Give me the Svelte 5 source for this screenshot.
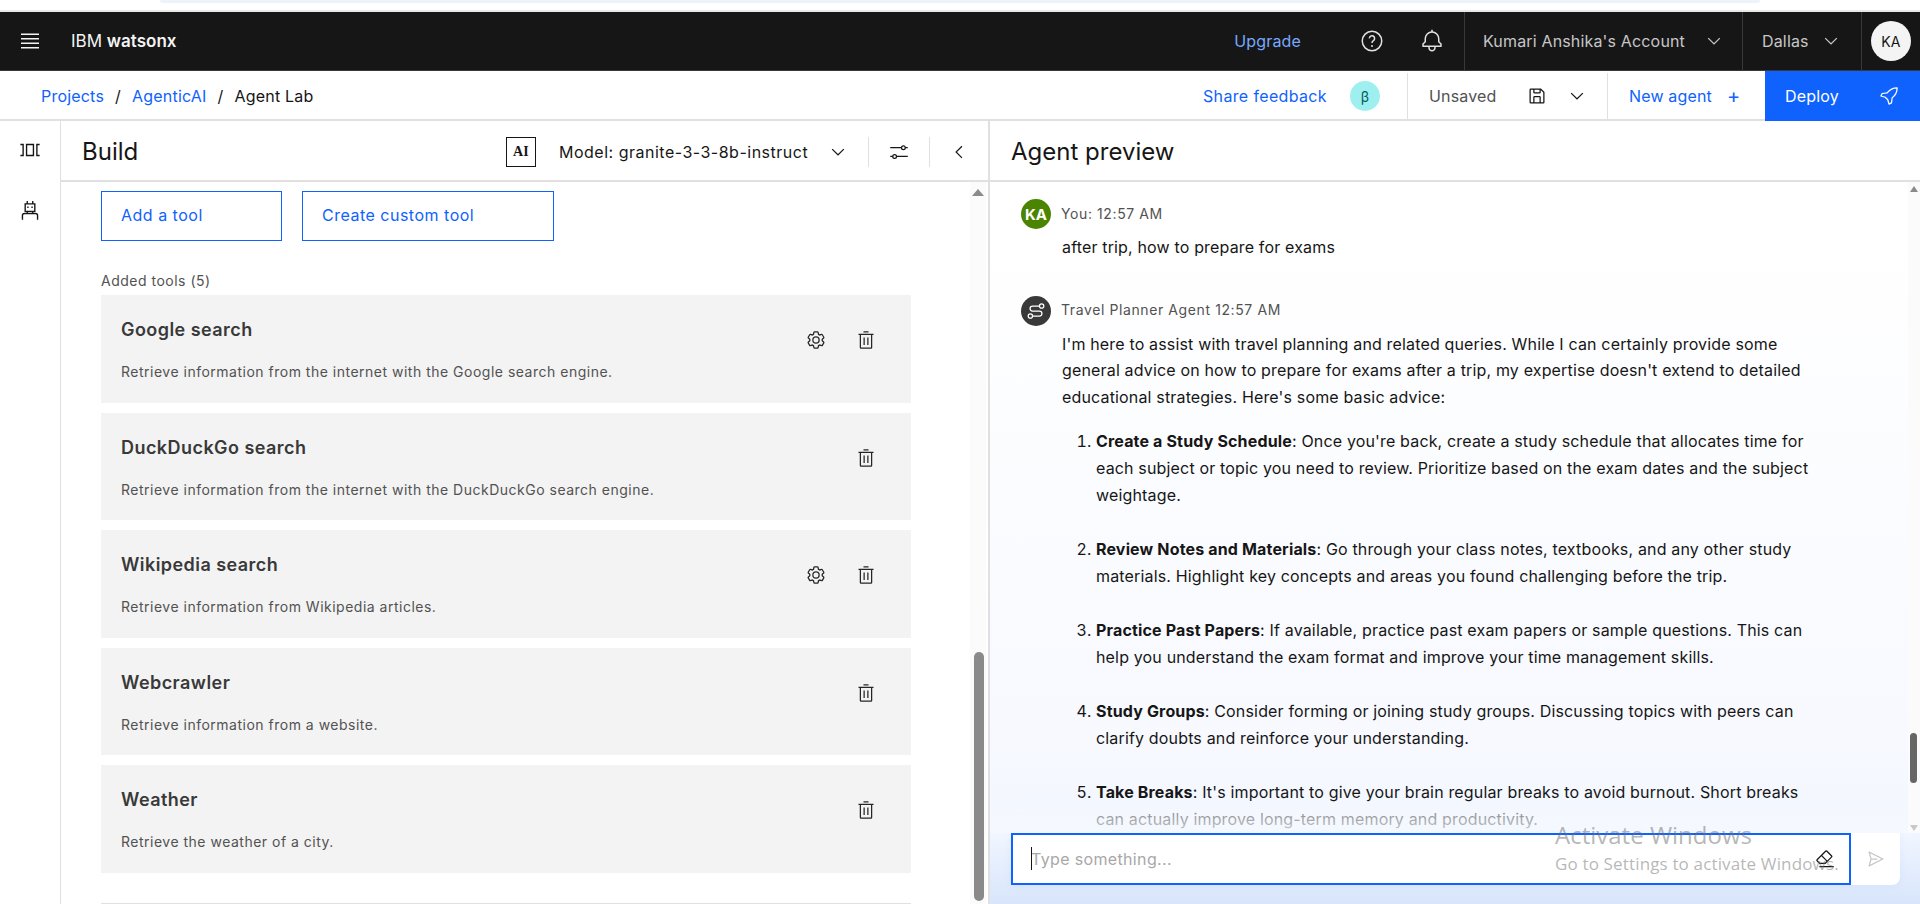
<script>
  const tools = [
    { name: "Google search", desc: "Retrieve information from the internet with the Google search engine.", settings: true },
    { name: "DuckDuckGo search", desc: "Retrieve information from the internet with the DuckDuckGo search engine.", settings: false },
    { name: "Wikipedia search", desc: "Retrieve information from Wikipedia articles.", settings: true },
    { name: "Webcrawler", desc: "Retrieve information from a website.", settings: false },
    { name: "Weather", desc: "Retrieve the weather of a city.", settings: false }
  ];

  const intro = [
    "I'm here to assist with travel planning and related queries. While I can certainly provide some",
    "general advice on how to prepare for exams after a trip, my expertise doesn't extend to detailed",
    "educational strategies. Here's some basic advice:"
  ];

  const steps = [
    { title: "Create a Study Schedule", lines: [": Once you're back, create a study schedule that allocates time for", "each subject or topic you need to review. Prioritize based on the exam dates and the subject", "weightage."] },
    { title: "Review Notes and Materials", lines: [": Go through your class notes, textbooks, and any other study", "materials. Highlight key concepts and areas you found challenging before the trip."] },
    { title: "Practice Past Papers", lines: [": If available, practice past exam papers or sample questions. This can", "help you understand the exam format and improve your time management skills."] },
    { title: "Study Groups", lines: [": Consider forming or joining study groups. Discussing topics with peers can", "clarify doubts and reinforce your understanding."] },
    { title: "Take Breaks", lines: [": It's important to give your brain regular breaks to avoid burnout. Short breaks", "can actually improve long-term memory and productivity."] }
  ];
</script>

{#snippet chevron()}
  <svg width="20" height="20" viewBox="0 0 32 32" fill="currentColor"><path d="M16 22 6 12l1.400-1.400 8.600 8.600 8.600-8.600L26 12z" /></svg>
{/snippet}

{#snippet trash()}
  <svg width="20" height="20" viewBox="0 0 32 32" fill="currentColor"><path d="M12 12h2v12h-2zM18 12h2v12h-2z" /><path d="M4 6v2h2v20a2 2 0 0 0 2 2h16a2 2 0 0 0 2-2V8h2V6zm4 22V8h16v20zM12 2h8v2h-8z" /></svg>
{/snippet}

{#snippet gear()}
  <svg width="20" height="20" viewBox="0 0 32 32" fill="currentColor"><path d="M27 16.76c0-.25 0-.5 0-.76s0-.51 0-.77l1.92-1.68A2 2 0 0 0 29.3 11l-2.36-4a2 2 0 0 0-1.73-1 2 2 0 0 0-.64.1l-2.43.82a11.35 11.35 0 0 0-1.31-.75l-.51-2.52a2 2 0 0 0-2-1.61h-4.68a2 2 0 0 0-2 1.61l-.51 2.52a11.48 11.48 0 0 0-1.32.75l-2.38-.86A2 2 0 0 0 6.79 6a2 2 0 0 0-1.73 1L2.7 11a2 2 0 0 0 .41 2.51L5 15.24c0 .25 0 .5 0 .76s0 .51 0 .77l-1.89 1.68A2 2 0 0 0 2.7 21l2.36 4a2 2 0 0 0 1.73 1 2 2 0 0 0 .64-.1l2.43-.82a11.35 11.35 0 0 0 1.31.75l.51 2.52a2 2 0 0 0 2 1.61h4.72a2 2 0 0 0 2-1.61l.51-2.52a11.48 11.48 0 0 0 1.32-.75l2.42.82a2 2 0 0 0 .64.1 2 2 0 0 0 1.73-1l2.28-4a2 2 0 0 0-.41-2.51zM25.21 24l-3.43-1.16a8.86 8.86 0 0 1-2.71 1.57L18.36 28h-4.72l-.71-3.55a9.36 9.36 0 0 1-2.7-1.57L6.79 24l-2.36-4 2.72-2.4a8.9 8.9 0 0 1 0-3.13L4.43 12l2.36-4 3.43 1.16a8.86 8.86 0 0 1 2.71-1.57L13.64 4h4.72l.71 3.55a9.36 9.36 0 0 1 2.7 1.57L25.21 8l2.36 4-2.72 2.4a8.9 8.9 0 0 1 0 3.13L27.57 20z" /><path d="M16 22a6 6 0 1 1 6-6 5.94 5.94 0 0 1-6 6zm0-10a3.91 3.91 0 0 0-4 4 3.91 3.91 0 0 0 4 4 3.91 3.91 0 0 0 4-4 3.91 3.91 0 0 0-4-4z" /></svg>
{/snippet}

<div class="page">
  <div class="browser-strip"><div class="pill"></div></div>

  <header class="topbar">
    <button class="menu" aria-label="Menu">
      <svg width="24" height="24" viewBox="0 0 32 32" fill="currentColor"><path d="M4 6h24v2H4zm0 18h24v2H4zm0-12h24v2H4zm0 6h24v2H4z" /></svg>
    </button>
    <div class="brand">IBM <b>watsonx</b></div>
    <a class="upgrade" href="#top">Upgrade</a>
    <div class="top-icon first">
      <svg width="24" height="24" viewBox="0 0 32 32" fill="none" stroke="currentColor" stroke-width="2"><circle cx="16" cy="16" r="13" /><path d="M12.500 12.500a3.500 3.500 0 1 1 5.400 2.900c-1.200.8-1.900 1.600-1.900 3.100" /><circle cx="16" cy="22.700" r="1.300" fill="currentColor" stroke="none" /></svg>
    </div>
    <div class="top-icon">
      <svg width="24" height="24" viewBox="0 0 32 32" fill="currentColor"><path d="M28.707 19.293L26 16.586V13a10.014 10.014 0 0 0-9-9.95V1h-2v2.05A10.014 10.014 0 0 0 6 13v3.586l-2.707 2.707A1 1 0 0 0 3 20v3a1 1 0 0 0 1 1h7v.777a5.15 5.15 0 0 0 4.5 5.199A5.006 5.006 0 0 0 21 25v-1h7a1 1 0 0 0 1-1v-3a1 1 0 0 0-.293-.707zM19 25a3 3 0 0 1-6 0v-1h6zm8-3H5v-1.586l2.707-2.707A1 1 0 0 0 8 17v-4a8 8 0 0 1 16 0v4a1 1 0 0 0 .293.707L27 20.414z" /></svg>
    </div>
    <div class="top-select account">Kumari Anshika's Account {@render chevron()}</div>
    <div class="top-select region">Dallas {@render chevron()}</div>
    <div class="top-avatar-cell"><span class="top-avatar">KA</span></div>
  </header>

  <nav class="subbar">
    <div class="crumbs">
      <a href="#top">Projects</a><span class="slash">/</span><a href="#top">AgenticAI</a><span class="slash">/</span><span>Agent Lab</span>
    </div>
    <div class="feedback">
      <a href="#top">Share feedback</a>
      <span class="beta">β</span>
    </div>
    <div class="save-group">
      <span class="unsaved">Unsaved</span>
      <svg width="20" height="20" viewBox="0 0 32 32" fill="currentColor"><path d="M27.71 9.29l-5-5A1 1 0 0 0 22 4H6a2 2 0 0 0-2 2v20a2 2 0 0 0 2 2h20a2 2 0 0 0 2-2V10a1 1 0 0 0-.29-.71zM12 6h8v4h-8zm8 20h-8v-8h8zm2 0v-8a2 2 0 0 0-2-2h-8a2 2 0 0 0-2 2v8H6V6h4v4a2 2 0 0 0 2 2h8a2 2 0 0 0 2-2V6.410l4 4V26z" /></svg>
      {@render chevron()}
    </div>
    <a class="new-agent" href="#top"><span class="new-label">New agent</span><span class="plus">+</span></a>
    <button class="deploy">
      Deploy
      <svg width="20" height="20" viewBox="0 0 32 32" fill="none" stroke="currentColor" stroke-width="2" stroke-linejoin="round"><path d="M29 3C22 3 17 6 13 11L5 12 3 16 10 18 14 22 16 29 20 27 21 19C26 15 29 10 29 3Z" /></svg>
    </button>
  </nav>

  <main class="workspace">
    <aside class="rail">
      <svg width="22" height="22" viewBox="0 0 32 32" fill="currentColor"><path d="M10 7h12v18H10zm2 2v14h8V9zM2 7h5v18H2v-2h3V9H2zM30 7h-5v18h5v-2h-3V9h3z" /></svg>
      <svg width="22" height="22" viewBox="0 0 32 32" fill="none" stroke="currentColor" stroke-width="2"><path d="M12 3v4M20 3v4M9 7h14v11H9zM5 30v-6a3 3 0 0 1 3-3h16a3 3 0 0 1 3 3v6M12 21v-3M20 21v-3" /><path d="M12 11h2v2h-2zM18 11h2v2h-2z" fill="currentColor" stroke="none" /></svg>
    </aside>

    <section class="build">
      <div class="build-head">
        <h2>Build</h2>
        <span class="ai-box">AI</span>
        <span class="model">Model: granite-3-3-8b-instruct</span>
        <span class="model-chev">{@render chevron()}</span>
        <span class="vsep"></span>
        <svg class="sliders" width="20" height="20" viewBox="0 0 32 32" fill="none" stroke="currentColor" stroke-width="2"><path d="M2 9h18M26 9h4M2 23h4M12 23h18" /><circle cx="23" cy="9" r="3" /><circle cx="9" cy="23" r="3" /></svg>
        <span class="vsep"></span>
        <svg class="collapse" width="20" height="20" viewBox="0 0 32 32" fill="currentColor"><path d="M10 16 20 6l1.400 1.400L12.800 16l8.600 8.600L20 26z" /></svg>
      </div>
      <div class="build-body">
        <div class="build-scroll">
          <div class="tool-actions">
            <button class="outline add">Add a tool</button>
            <button class="outline custom">Create custom tool</button>
          </div>
          <div class="added-label">Added tools (5)</div>
          <div class="tool-list">
            {#each tools as tool}
              <article class="tool">
                <div class="tool-text">
                  <h3>{tool.name}</h3>
                  <p>{tool.desc}</p>
                </div>
                <div class="tool-icons">
                  {#if tool.settings}{@render gear()}{/if}
                  {@render trash()}
                </div>
              </article>
            {/each}
          </div>
          <div class="list-end"></div>
        </div>
        <div class="scrollbar build-bar">
          <span class="arrow"></span>
          <span class="thumb"></span>
        </div>
      </div>
    </section>

    <section class="preview">
      <div class="preview-head"><h2>Agent preview</h2></div>
      <div class="chat-area">
        <div class="chat">
          <div class="msg you">
            <div class="msg-meta"><span class="avatar green">KA</span><span class="meta-text">You: 12:57 AM</span></div>
            <p class="msg-text">after trip, how to prepare for exams</p>
          </div>
          <div class="msg agent">
            <div class="msg-meta">
              <span class="avatar dark">
                <svg width="20" height="20" viewBox="0 0 32 32" fill="none" stroke="currentColor" stroke-width="2"><circle cx="25" cy="8" r="3.500" /><circle cx="7" cy="24" r="3.500" /><path d="M21.500 8H10.500a4 4 0 0 0 0 8h11a4 4 0 0 1 0 8H10.500" /></svg>
              </span>
              <span class="meta-text">Travel Planner Agent 12:57 AM</span>
            </div>
            <div class="msg-text answer">
              {#each intro as line}<div>{line}</div>{/each}
              <ol>
                {#each steps as step}
                  <li>
                    <b>{step.title}</b>{#each step.lines as line, i}{#if i > 0}<br />{/if}{line}{/each}
                  </li>
                {/each}
              </ol>
            </div>
          </div>
          <div class="fade"></div>
        </div>
        <div class="scrollbar chat-bar">
          <span class="arrow"></span>
          <span class="thumb"></span>
          <span class="arrow down"></span>
        </div>
      </div>
      <div class="composer">
        <div class="input">
          <span class="caret"></span>
          <span class="placeholder">Type something...</span>
          <svg width="20" height="20" viewBox="0 0 32 32" fill="currentColor"><path d="M7 27h23v2H7zM27.380 10.510L19.450 2.590a2 2 0 0 0-2.830 0l-14 14a2 2 0 0 0 0 2.830L7.130 24h9.590l10.660-10.660a2 2 0 0 0 0-2.830zM15.890 22H8l-4-4 6.310-6.310 7.930 7.920zm3.760-3.760l-7.920-7.930L18 4l8 7.930z" /></svg>
        </div>
        <button class="send" aria-label="Send">
          <svg width="20" height="20" viewBox="0 0 32 32" fill="currentColor"><path d="M27.450 15.110l-22-11a1 1 0 0 0-1.080.12 1 1 0 0 0-.33 1L7 16 4 26.740A1 1 0 0 0 5 28a1 1 0 0 0 .45-.11l22-11a1 1 0 0 0 0-1.780zm-20.900 10L8.760 17H18v-2H8.760L6.550 6.890 24.760 16z" /></svg>
        </button>
      </div>
    </section>
  </main>

  <div class="activate">
    <div class="activate-title">Activate Windows</div>
    <div class="activate-sub">Go to Settings to activate Windows.</div>
  </div>
</div>

<style>
  :global(body) {
    margin: 0;
    background: #fff;
  }
  .page {
    position: relative;
    width: 1920px;
    height: 904px;
    overflow: hidden;
    display: flex;
    flex-direction: column;
    font-family: Inter, "Liberation Sans", sans-serif;
    color: #161616;
    font-size: 16px;
    letter-spacing: 0.16px;
  }
  a {
    color: #0f62fe;
    text-decoration: none;
  }
  button {
    font: inherit;
    letter-spacing: inherit;
    background: none;
    border: none;
    padding: 0;
  }
  h2, h3, p {
    margin: 0;
    font-weight: 400;
  }

  .browser-strip {
    height: 12px;
    flex: none;
    box-sizing: border-box;
    background: #fff;
    border-bottom: 2px solid #e8e8e8;
    padding-left: 160px;
  }
  .pill {
    width: 1600px;
    height: 3px;
    background: #edf2fb;
    border-radius: 0 0 8px 8px;
  }

  .topbar {
    height: 59px;
    flex: none;
    box-sizing: border-box;
    background: #161616;
    border-bottom: 1px solid #393939;
    color: #c6c6c6;
    display: flex;
    align-items: center;
  }
  .menu {
    color: #f4f4f4;
    display: flex;
    margin-left: 18px;
  }
  .brand {
    margin-left: 29px;
    color: #f4f4f4;
    flex: 1;
    font-size: 17px;
    letter-spacing: 0;
  }
  .brand b {
    font-weight: 600;
  }
  .upgrade {
    color: #78a9ff;
    margin-right: 59px;
  }
  .top-icon {
    display: flex;
    width: 24px;
    margin-right: 20px;
    color: #e0e0e0;
  }
  .top-icon.first {
    margin-right: 36px;
  }
  .top-select {
    height: 100%;
    display: flex;
    align-items: center;
    justify-content: space-between;
    box-sizing: border-box;
    border-left: 1px solid #393939;
    padding-left: 18px;
    white-space: nowrap;
  }
  .account {
    width: 278px;
    padding-right: 18px;
  }
  .region {
    width: 119px;
    padding-left: 19px;
    padding-right: 20px;
  }
  .top-avatar-cell {
    height: 100%;
    width: 59px;
    box-sizing: border-box;
    border-left: 1px solid #393939;
    display: flex;
    align-items: center;
    padding-left: 9px;
  }
  .top-avatar {
    width: 40px;
    height: 40px;
    border-radius: 50%;
    background: #f4f4f4;
    color: #161616;
    font-size: 14px;
    display: flex;
    align-items: center;
    justify-content: center;
  }

  .subbar {
    height: 50px;
    flex: none;
    box-sizing: border-box;
    border-bottom: 2px solid #e0e0e0;
    padding-top: 2px;
    display: flex;
    align-items: center;
  }
  .crumbs {
    padding-left: 41px;
    flex: 1;
    display: flex;
    align-items: center;
    letter-spacing: 0.2px;
  }
  .slash {
    margin: 0 11px;
  }
  .feedback {
    display: flex;
    align-items: center;
    justify-content: space-between;
    box-sizing: border-box;
    padding-right: 27px;
    width: 204px;
    white-space: nowrap;
    letter-spacing: 0.35px;
  }
  .beta {
    width: 30px;
    height: 30px;
    border-radius: 50%;
    background: #9ef0f0;
    color: #005d5d;
    font-size: 14px;
    display: flex;
    align-items: center;
    justify-content: center;
  }
  .save-group {
    height: 100%;
    box-sizing: border-box;
    width: 200px;
    border-left: 1px solid #e0e0e0;
    display: flex;
    align-items: center;
    padding-left: 21px;
  }
  .unsaved {
    color: #525252;
    width: 98px;
  }
  .save-group svg:last-child {
    margin-left: 20px;
  }
  .new-agent {
    height: 100%;
    box-sizing: border-box;
    width: 158px;
    border-left: 1px solid #e0e0e0;
    display: flex;
    align-items: center;
    padding-left: 21px;
    white-space: nowrap;
  }
  .new-label {
    width: 98px;
  }
  .plus {
    font-size: 20px;
    line-height: 1;
  }
  .deploy {
    width: 155px;
    height: 50px;
    margin-top: -2px;
    align-self: flex-start;
    background: #0f62fe;
    color: #fff;
    display: flex;
    align-items: center;
    justify-content: space-between;
    box-sizing: border-box;
    padding: 0 21px 0 20px;
  }

  .workspace {
    flex: 1;
    min-height: 0;
    display: grid;
    grid-template-columns: 61px 929px 1fr;
  }
  .rail {
    border-right: 1px solid #e0e0e0;
    display: flex;
    flex-direction: column;
    align-items: center;
    gap: 38px;
    padding-top: 18px;
  }

  .build {
    display: flex;
    flex-direction: column;
    min-height: 0;
    border-right: 2px solid #e0e0e0;
  }
  .build-head {
    height: 61px;
    flex: none;
    box-sizing: border-box;
    border-bottom: 2px solid #e0e0e0;
    padding-top: 2px;
    display: flex;
    align-items: center;
    padding-left: 21px;
  }
  h2 {
    font-size: 24px;
    letter-spacing: 0;
  }
  .build-head h2 {
    flex: 1;
  }
  .ai-box {
    width: 30px;
    height: 30px;
    box-sizing: border-box;
    border: 1px solid #161616;
    font-size: 14px;
    font-weight: 700;
    display: flex;
    align-items: center;
    justify-content: center;
    font-family: "Liberation Serif", serif;
  }
  .model {
    margin-left: 23px;
    width: 269px;
    white-space: nowrap;
    letter-spacing: 0.5px;
  }
  .model-chev {
    display: flex;
    width: 40px;
  }
  .vsep {
    width: 1px;
    height: 30px;
    background: #e0e0e0;
  }
  .sliders {
    margin: 0 20px;
  }
  .collapse {
    margin: 0 19px;
  }

  .build-body {
    flex: 1;
    min-height: 0;
    display: flex;
    overflow: hidden;
  }
  .build-scroll {
    flex: 1;
    padding: 9px 0 0 40px;
  }
  .tool-actions {
    display: flex;
    gap: 20px;
  }
  .outline {
    height: 50px;
    box-sizing: border-box;
    border: 1px solid #0f62fe;
    color: #0f62fe;
    text-align: left;
    padding: 0 0 2px 19px;
    letter-spacing: 0.5px;
  }
  .add {
    width: 181px;
  }
  .custom {
    width: 252px;
  }
  .added-label {
    margin-top: 31px;
    font-size: 14px;
    color: #525252;
    line-height: 18px;
    height: 23px;
    letter-spacing: 0.5px;
  }
  .tool-list {
    display: flex;
    flex-direction: column;
    gap: 10px;
    width: 810px;
  }
  .tool {
    height: 107.6px;
    background: #f3f3f3;
    display: flex;
    justify-content: space-between;
    box-sizing: border-box;
    padding: 23px 35px 0 20px;
  }
  .tool h3 {
    font-size: 18px;
    font-weight: 600;
    color: #393939;
    line-height: 24px;
    letter-spacing: 0.45px;
  }
  .tool p {
    margin-top: 20px;
    font-size: 14px;
    line-height: 20px;
    color: #525252;
    letter-spacing: 0.5px;
  }
  .tool-icons {
    display: flex;
    gap: 30px;
    padding-top: 12px;
    height: 20px;
    color: #262626;
  }
  .list-end {
    margin-top: 30px;
    width: 810px;
    border-top: 1px solid #e0e0e0;
  }

  .scrollbar {
    flex: none;
    background: #fbfbfb;
    position: relative;
    display: flex;
    flex-direction: column;
    align-items: center;
  }
  .arrow {
    width: 0;
    height: 0;
    border-left: 6px solid transparent;
    border-right: 6px solid transparent;
    border-bottom: 7px solid #8a8a8a;
    margin-top: 7px;
  }
  .arrow.down {
    border-bottom: none;
    border-top: 7px solid #c8c8c8;
    margin-top: 0;
    position: absolute;
    bottom: 2px;
  }
  .thumb {
    display: block;
    position: absolute;
    background: #8a8a8a;
    border-radius: 5px;
  }
  .build-bar {
    width: 16px;
    margin-right: 2px;
  }
  .build-bar .thumb {
    top: 470px;
    left: 4px;
    width: 10px;
    height: 249px;
  }

  .preview {
    display: flex;
    flex-direction: column;
    min-height: 0;
    position: relative;
    background: linear-gradient(#fff 15%, #f7f9ff 80%, #f1f6ff 91%, #d8e5fb 100%);
  }
  .preview-head {
    height: 61px;
    flex: none;
    box-sizing: border-box;
    border-bottom: 2px solid #e0e0e0;
    padding-top: 2px;
    display: flex;
    align-items: center;
    padding-left: 21px;
    background: #fff;
  }
  .chat-area {
    height: 651px;
    flex: none;
    display: flex;
    overflow: hidden;
  }
  .chat {
    flex: 1;
    padding: 17px 0 0 31px;
    min-width: 0;
    position: relative;
  }
  .msg-meta {
    display: flex;
    align-items: center;
    gap: 10px;
    font-size: 14px;
    color: #525252;
    letter-spacing: 0.6px;
  }
  .meta-text {
    margin-top: -2px;
  }
  .avatar {
    width: 30px;
    height: 30px;
    border-radius: 50%;
    color: #fff;
    font-size: 15px;
    font-weight: 700;
    display: flex;
    align-items: center;
    justify-content: center;
    letter-spacing: 0;
  }
  .green {
    background: #4b8400;
  }
  .dark {
    background: #393939;
  }
  .msg-text {
    margin-left: 41px;
    line-height: 26.5px;
    white-space: nowrap;
  }
  .you .msg-text {
    margin-top: 5px;
  }
  .agent {
    margin-top: 35px;
  }
  .answer {
    margin-top: 5px;
  }
  ol {
    margin: 17.5px 0 0;
    padding-left: 34px;
  }
  li {
    line-height: 27px;
    margin-bottom: 27px;
  }
  .fade {
    position: absolute;
    left: 0;
    right: 0;
    bottom: 0;
    height: 24px;
    background: linear-gradient(rgba(246, 249, 255, 0.5), rgba(246, 249, 255, 0.8));
  }
  .chat-bar {
    width: 12px;
  }
  .chat-bar .arrow {
    border-left-width: 4px;
    border-right-width: 4px;
    border-bottom-width: 6px;
    margin-top: 4px;
  }
  .chat-bar .arrow.down {
    border-top-width: 6px;
    border-bottom-width: 0;
    margin-top: 0;
  }
  .chat-bar .thumb {
    top: 551px;
    left: 2px;
    width: 7px;
    height: 50px;
    background: #666;
  }

  .composer {
    margin: 0 20px 0 21px;
    height: 52px;
    display: flex;
    background: #fff;
    border-radius: 0 0 8px 0;
    box-shadow: 0 0 10px rgba(15, 98, 254, 0.06);
  }
  .input {
    width: 840px;
    box-sizing: border-box;
    border: 2px solid #0f62fe;
    background: #fff;
    display: flex;
    align-items: center;
    padding: 0 14px 0 18px;
    justify-content: space-between;
    position: relative;
    letter-spacing: 0.35px;
  }
  .caret {
    position: absolute;
    left: 18px;
    top: 12px;
    width: 1px;
    height: 23px;
    background: #161616;
  }
  .placeholder {
    color: #a8a8a8;
  }
  .send {
    flex: 1;
    color: #c6c6c6;
    display: flex;
    align-items: center;
    justify-content: center;
  }

  .activate {
    position: absolute;
    left: 1555px;
    top: 820px;
    color: rgba(110, 110, 110, 0.5);
    font-family: "Open Sans", sans-serif;
    letter-spacing: 0;
    pointer-events: none;
    white-space: nowrap;
  }
  .activate-title {
    font-size: 24px;
    line-height: 30px;
  }
  .activate-sub {
    font-size: 17px;
    line-height: 22px;
    margin-top: 3px;
    letter-spacing: 0.15px;
  }
</style>
